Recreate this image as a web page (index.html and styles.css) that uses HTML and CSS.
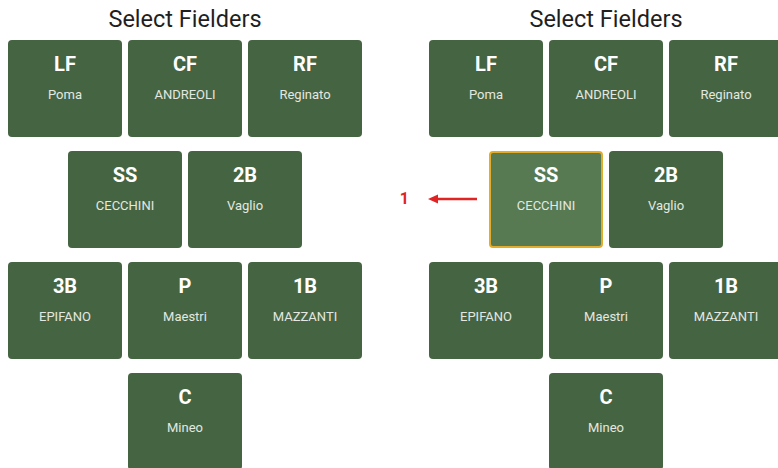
FILE: index.html
```html
<html>
  <head>
    <title>Select Fielders</title>
    <link rel="stylesheet" href="styles.css">
  </head>
  <body>
    <main class="screens">

      <section class="field">
        <h1>Select Fielders</h1>
        <div class="row">
          <div class="spot"><b>LF</b><span>Poma</span></div>
          <div class="spot"><b>CF</b><span>ANDREOLI</span></div>
          <div class="spot"><b>RF</b><span>Reginato</span></div>
        </div>
        <div class="row">
          <div class="spot"><b>SS</b><span>CECCHINI</span></div>
          <div class="spot"><b>2B</b><span>Vaglio</span></div>
        </div>
        <div class="row">
          <div class="spot"><b>3B</b><span>EPIFANO</span></div>
          <div class="spot"><b>P</b><span>Maestri</span></div>
          <div class="spot"><b>1B</b><span>MAZZANTI</span></div>
        </div>
        <div class="row">
          <div class="spot"><b>C</b><span>Mineo</span></div>
        </div>
      </section>

      <section class="field">
        <h1>Select Fielders</h1>
        <div class="row">
          <div class="spot"><b>LF</b><span>Poma</span></div>
          <div class="spot"><b>CF</b><span>ANDREOLI</span></div>
          <div class="spot"><b>RF</b><span>Reginato</span></div>
        </div>
        <div class="row">
          <div class="spot selected">
            <b>SS</b><span>CECCHINI</span>
            <div class="callout">
              <em>1</em>
              <svg width="50" height="10" viewBox="0 0 50 10">
                <path d="M8 5 H49" stroke="#e02424" stroke-width="2.4"/>
                <path d="M0 5 L10 0.5 L10 9.5 Z" fill="#e02424"/>
              </svg>
            </div>
          </div>
          <div class="spot"><b>2B</b><span>Vaglio</span></div>
        </div>
        <div class="row">
          <div class="spot"><b>3B</b><span>EPIFANO</span></div>
          <div class="spot"><b>P</b><span>Maestri</span></div>
          <div class="spot"><b>1B</b><span>MAZZANTI</span></div>
        </div>
        <div class="row">
          <div class="spot"><b>C</b><span>Mineo</span></div>
        </div>
      </section>

    </main>
  </body>
</html>
```

FILE: styles.css
```css
html, body { margin:0; padding:0; background:#fff; }
body { width:778px; height:468px; overflow:hidden; font-family:Roboto, "Liberation Sans", sans-serif; }

.screens {
  display:flex;
  gap:67px;
  padding:6px 0 0 8px;
}

.field {
  flex:none;
  width:354px;
  display:flex;
  flex-direction:column;
  gap:14px;
}

.field h1 {
  margin:0 0 -6px 0;
  font-size:23.5px;
  font-weight:400;
  line-height:26px;
  color:#1f1f1f;
  text-align:center;
}

.row { display:flex; justify-content:center; gap:6px; }

.spot {
  position:relative;
  box-sizing:border-box;
  width:114px;
  height:97px;
  padding-top:12px;
  display:flex;
  flex-direction:column;
  align-items:center;
  background:#456441;
  border-radius:4px;
  color:#fff;
}

.spot b { font-size:20px; font-weight:700; line-height:24px; }
.spot span { margin-top:11px; font-size:13px; line-height:16px; color:#e3e8e1; }

.spot.selected {
  background:#577a53;
  border:2px solid #e2ad2c;
  padding-top:10px;
}

.callout {
  position:absolute;
  right:calc(100% + 13px);
  top:38px;
  display:flex;
  align-items:center;
  gap:19px;
}
.callout em {
  font-style:normal;
  font-weight:700;
  font-size:16px;
  line-height:16px;
  color:#e02424;
}
.callout svg { display:block; }
```
